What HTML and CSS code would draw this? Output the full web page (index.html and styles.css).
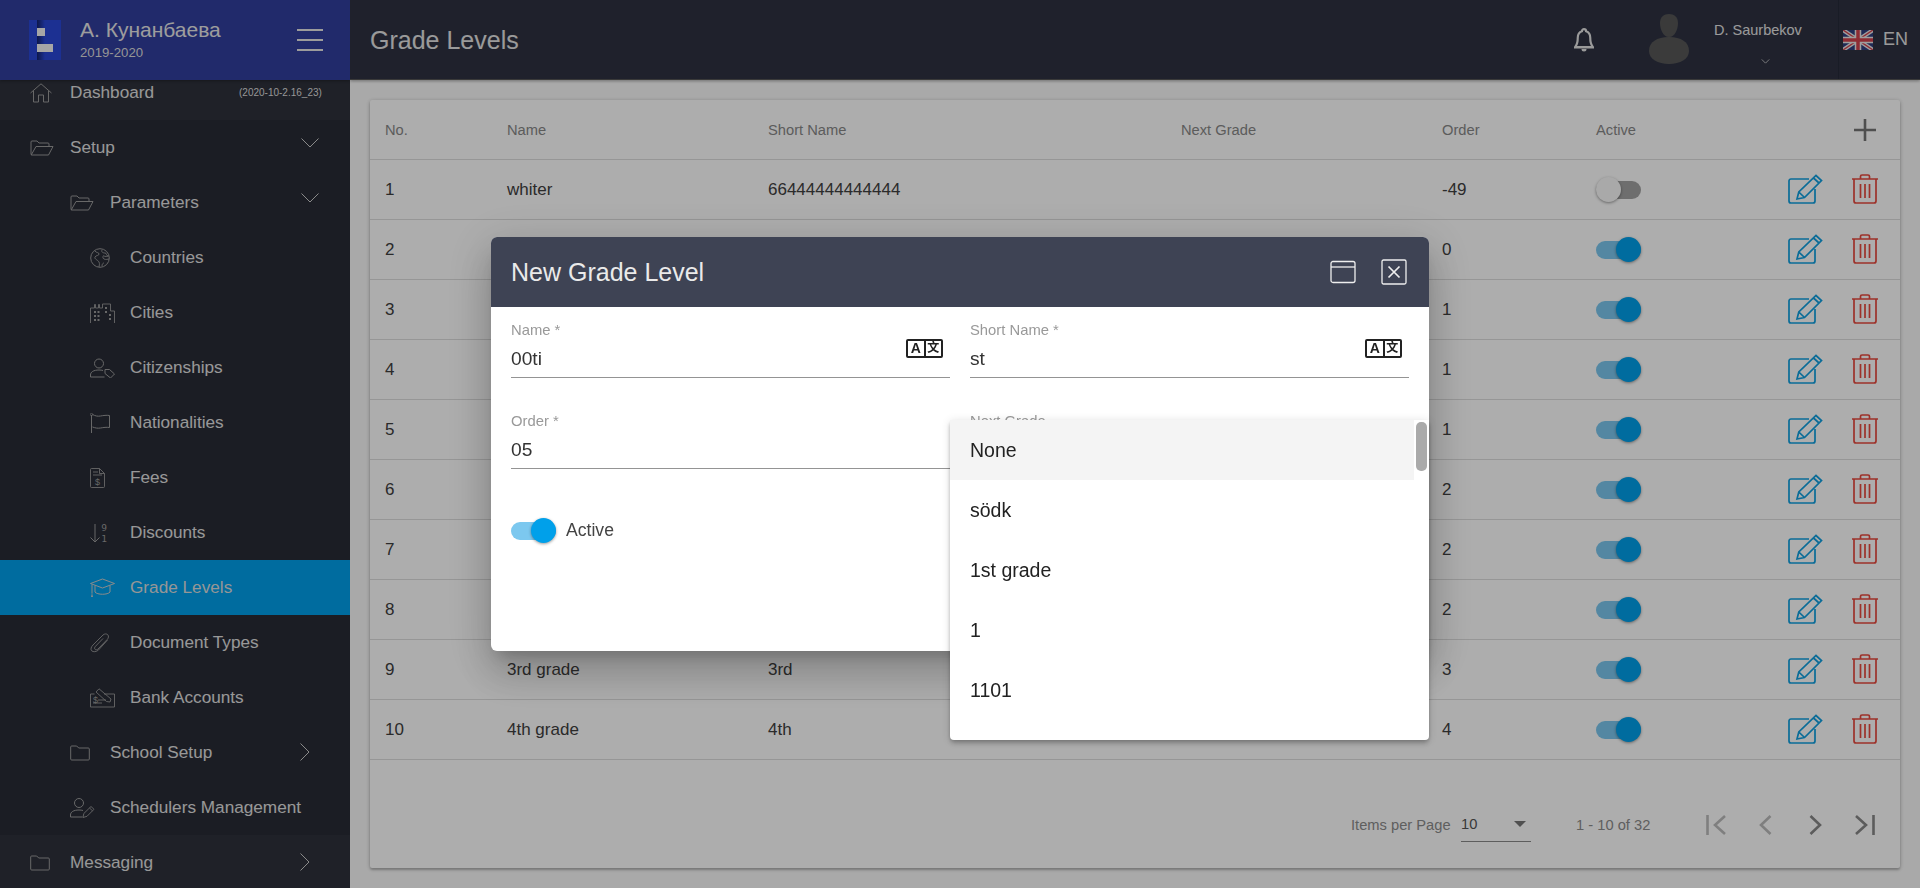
FILE: index.html
```html
<!DOCTYPE html>
<html lang="en">
<head>
<meta charset="utf-8">
<title>Grade Levels</title>
<link rel="stylesheet" href="styles.css">
</head>
<body>
<svg class="defs" width="0" height="0" aria-hidden="true">
  <defs>
    <symbol id="i-folder-open" viewBox="0 0 24 16"><path d="M1 14.500V2a1 1 0 0 1 1-1h5l2 2h9a1 1 0 0 1 1 1v2M1.200 15h17.300l4.500-8.500H6z" fill="none" stroke="currentColor" stroke-width="1"/></symbol>
    <symbol id="i-folder" viewBox="0 0 20 16"><path d="M.7 14V2a1 1 0 0 1 1-1h5l2 2h9.600a1 1 0 0 1 1 1v10a1 1 0 0 1-1 1H1.700a1 1 0 0 1-1-1z" fill="none" stroke="currentColor" stroke-width="1"/></symbol>
    <symbol id="i-down" viewBox="0 0 18 10"><path d="M.5.5 9 9 17.500.5" fill="none" stroke="currentColor" stroke-width="1"/></symbol>
    <symbol id="i-right" viewBox="0 0 10 18"><path d="M.5.500 9 9 .5 17.500" fill="none" stroke="currentColor" stroke-width="1"/></symbol>
    <symbol id="i-edit" viewBox="0 0 35 30"><path d="M21 5H3a2 2 0 0 0-2 2v20a2 2 0 0 0 2 2h22a2 2 0 0 0 2-2V15" fill="none" stroke="currentColor" stroke-width="1.700"/><path d="M9 25l1.800-7L28 1.500l5.500 5L16.500 23.500zM10.800 18l5.700 5.500M25.500 4l5.500 5" fill="none" stroke="currentColor" stroke-width="1.700"/></symbol>
    <symbol id="i-trash" viewBox="0 0 26 30"><path d="M0 5h26M8.500 4.500V2.500a1.500 1.500 0 0 1 1.500-1.500h6a1.500 1.500 0 0 1 1.500 1.500v2M2 5.500V27a2 2 0 0 0 2 2h18a2 2 0 0 0 2-2V5.500M8.500 10v14M13 10v14M17.500 10v14" fill="none" stroke="currentColor" stroke-width="1.700"/></symbol>
  </defs>
</svg>

<div class="app">
  <aside class="sidebar">
    <div class="brand">
      <div class="logo"><span class="logo-a"></span><span class="logo-b"></span></div>
      <div class="brand-text">
        <div class="brand-name">А. Кунанбаева</div>
        <div class="brand-year">2019-2020</div>
      </div>
      <div class="burger"><span></span><span></span><span></span></div>
    </div>
    <nav class="nav">
      <div class="nav-item top lit">
        <svg class="ico w22" viewBox="0 0 22 20"><path d="M.5 10 11 .8 21.500 10M3.500 8v11h5v-7h5v7h5V8" fill="none" stroke="currentColor"/></svg>
        <span class="label">Dashboard</span><span class="version">(2020-10-2.16_23)</span>
      </div>
      <div class="nav-item top">
        <svg class="ico w24"><use href="#i-folder-open"/></svg>
        <span class="label">Setup</span><svg class="chev-down"><use href="#i-down"/></svg>
      </div>
      <div class="nav-item sub">
        <svg class="ico w24"><use href="#i-folder-open"/></svg>
        <span class="label">Parameters</span><svg class="chev-down"><use href="#i-down"/></svg>
      </div>
      <div class="nav-item leaf">
        <svg class="ico w20" viewBox="0 0 20 20"><circle cx="10" cy="10" r="9.300" fill="none" stroke="currentColor"/><path d="M5 3c1 2 4 1 4 3s-3 1-4 3 3 3 4 5 0 4 0 5M12 2c-1 2 1 3 3 3s1 3 3 3-3 1-4 0-2 2 0 3 4 0 5 0M12 18c0-2 1-3 2-3" fill="none" stroke="currentColor" stroke-width=".9"/></svg>
        <span class="label">Countries</span>
      </div>
      <div class="nav-item leaf">
        <svg class="ico w25" viewBox="0 0 25 20"><path d="M.5 20V5h4V1.500h1V5h3V1.500h1V5h3V1h8v7h4v12" fill="none" stroke="currentColor" stroke-width=".9"/><path d="M4 8h2v2H4zM7.500 8h2v2h-2zM4 12h2v2H4zM7.500 12h2v2h-2zM4 16h2v2H4zM7.500 16h2v2h-2zM15 4h2v2h-2zM15 8h2v2h-2zM19 11h2v2h-2zM19 15h2v2h-2z" fill="currentColor"/></svg>
        <span class="label">Cities</span>
      </div>
      <div class="nav-item leaf">
        <svg class="ico w25" viewBox="0 0 25 20"><circle cx="9" cy="5.500" r="4.500" fill="none" stroke="currentColor"/><path d="M.5 19v-2c0-3 3-5 8.500-5 1.500 0 3 .2 4 .500M.5 19h14" fill="none" stroke="currentColor"/><path d="M15 11.500h4.500l5 4.500-4 4-5.500-4.500z" fill="none" stroke="currentColor"/></svg>
        <span class="label">Citizenships</span>
      </div>
      <div class="nav-item leaf">
        <svg class="ico w20" viewBox="0 0 20 20"><path d="M1.500 2v18M2.500 1.500c3 1.500 5 2 8 1.500s6-1 9-.5v12c-3-.5-6 0-9 .5s-5 0-8-1" fill="none" stroke="currentColor"/><circle cx="1.500" cy="1.500" r="1.200" fill="none" stroke="currentColor" stroke-width=".7"/></svg>
        <span class="label">Nationalities</span>
      </div>
      <div class="nav-item leaf">
        <svg class="ico w15" viewBox="0 0 15 20"><path d="M.5 1.500a1 1 0 0 1 1-1h8l5 5v13a1 1 0 0 1-1 1h-12a1 1 0 0 1-1-1zM9.500.5v5h5M3 4h5M3 7h9" fill="none" stroke="currentColor" stroke-width=".9"/><text class="fee-sign" x="7.500" y="16.500" text-anchor="middle">$</text></svg>
        <span class="label">Fees</span>
      </div>
      <div class="nav-item leaf">
        <svg class="ico w18" viewBox="0 0 18 20"><path d="M5 1v18M.5 14.500 5 19l4.500-4.500" fill="none" stroke="currentColor"/><text class="sort-num" x="14" y="8">9</text><text class="sort-num" x="14" y="18.500">1</text></svg>
        <span class="label">Discounts</span>
      </div>
      <div class="nav-item leaf active">
        <svg class="ico w25" viewBox="0 0 25 20"><path d="M12.500 1 24.500 5.500 12.500 10 .5 5.500zM5 7.500V14c2 3 13 3 15 0V7.500M2 6.500v9" fill="none" stroke="currentColor"/><path d="M1 19l1-4 1 4z" fill="currentColor"/></svg>
        <span class="label">Grade Levels</span>
      </div>
      <div class="nav-item leaf">
        <svg class="ico w20" viewBox="0 0 20 20"><path d="M17.500 7 8.500 17c-2 2-5.500 2.200-6.800.8S1 14 3 12L13 2c1.500-1.400 3.700-1.400 4.800-.2s.8 3.200-.6 4.700L8 16c-1 1-2.300 1-3 .3s-.5-2 .5-3L13 5.500" fill="none" stroke="currentColor" stroke-width=".9"/></svg>
        <span class="label">Document Types</span>
      </div>
      <div class="nav-item leaf">
        <svg class="ico w25" viewBox="0 0 25 20"><path d="M.5 6h4M14 6h10.500v13H.5V6M3 15h9M8 12h8" fill="none" stroke="currentColor" stroke-width=".9"/><path d="M6 4 9 .8 21 11l-1 3-3.500-.5z" fill="none" stroke="currentColor" stroke-width=".9"/><text class="fee-sign" x="3" y="15">$</text></svg>
        <span class="label">Bank Accounts</span>
      </div>
      <div class="nav-item sub">
        <svg class="ico w20h"><use href="#i-folder"/></svg>
        <span class="label">School Setup</span><svg class="chev-right"><use href="#i-right"/></svg>
      </div>
      <div class="nav-item sub">
        <svg class="ico w25" viewBox="0 0 25 20"><circle cx="9" cy="5" r="4.500" fill="none" stroke="currentColor"/><path d="M.5 19v-2c0-3 3-5 8.500-5 1.500 0 3 .2 4 .500M.5 19h12" fill="none" stroke="currentColor"/><path d="M13 19.500l.8-4L21 8.500l3 2.800-7 7zM19.500 10l3 2.800" fill="none" stroke="currentColor" stroke-width=".9"/></svg>
        <span class="label">Schedulers Management</span>
      </div>
      <div class="nav-item top lit">
        <svg class="ico w20h"><use href="#i-folder"/></svg>
        <span class="label">Messaging</span><svg class="chev-right"><use href="#i-right"/></svg>
      </div>
    </nav>
  </aside>

  <div class="main">
    <header class="topbar">
      <h1 class="page-title">Grade Levels</h1>
      <svg class="bell" viewBox="0 0 24 30"><path d="M9.500 5a2.500 2.500 0 1 1 5 0C18 6 19.500 9 19.500 13c0 5 .8 8 2.500 10v1H2v-1C3.700 21 4.500 18 4.500 13c0-4 1.500-7 5-8z" fill="none" stroke="currentColor" stroke-width="2.600"/><path d="M0 24.500h24" stroke="currentColor" stroke-width="2.600"/><path d="M9 26.500h6a3 3 0 0 1-6 0z" fill="currentColor"/></svg>
      <svg class="avatar" viewBox="0 0 40 50"><path d="M11 9C11 3 15 0 20 0s9 3 9 9-3 14-9 14-9-8-9-14z" fill="#565656"/><path d="M0 37c0-9 8-14 20-14s20 5 20 14c0 8-9 13-20 13S0 45 0 37z" fill="#585858"/></svg>
      <div class="user">
        <div class="user-name">D. Saurbekov</div>
        <svg class="user-chev" viewBox="0 0 10 6"><path d="M.5.5 5 5 9.500.5" fill="none" stroke="currentColor"/></svg>
      </div>
      <div class="lang">
        <svg class="flag" viewBox="0 0 30 20"><rect width="30" height="20" fill="#2f3f7f"/><path d="M0 0 30 20M30 0 0 20" stroke="#e9e9e9" stroke-width="4"/><path d="M0 0 30 20M30 0 0 20" stroke="#d2404c" stroke-width="1.400"/><path d="M15 0v20M0 10h30" stroke="#e9e9e9" stroke-width="6.500"/><path d="M15 0v20M0 10h30" stroke="#d2404c" stroke-width="3.500"/></svg>
        <span class="lang-code">EN</span>
      </div>
    </header>

    <section class="card">
      <table class="grid">
        <colgroup><col class="c-no"><col class="c-name"><col class="c-short"><col class="c-next"><col class="c-order"><col class="c-active"><col class="c-actions"></colgroup>
        <thead>
          <tr><th>No.</th><th>Name</th><th>Short Name</th><th>Next Grade</th><th>Order</th><th>Active</th>
            <th class="plus-cell"><svg class="plus" viewBox="0 0 24 24"><path d="M12 1v22M1 12h22" stroke="currentColor" stroke-width="2.600"/></svg></th></tr>
        </thead>
        <tbody id="rows"></tbody>
      </table>
      <div class="pager">
        <span class="pager-label">Items per Page</span>
        <div class="pager-select"><span>10</span><i class="tri"></i></div>
        <span class="pager-range">1 - 10 of 32</span>
        <div class="pager-btns">
          <svg class="pg dim" viewBox="0 0 20 22"><path d="M1.500 1v20" stroke="currentColor" stroke-width="2.600"/><path d="M19 2 9 11l10 9" fill="none" stroke="currentColor" stroke-width="2.600"/></svg>
          <svg class="pg dim narrow" viewBox="0 0 14 22"><path d="M12.500 2 3 11l9.500 9" fill="none" stroke="currentColor" stroke-width="2.600"/></svg>
          <svg class="pg narrow" viewBox="0 0 14 22"><path d="M1.500 2 11 11l-9.500 9" fill="none" stroke="currentColor" stroke-width="2.600"/></svg>
          <svg class="pg" viewBox="0 0 20 22"><path d="M18.500 1v20" stroke="currentColor" stroke-width="2.600"/><path d="M1 2l10 9-10 9" fill="none" stroke="currentColor" stroke-width="2.600"/></svg>
        </div>
      </div>
    </section>
  </div>
</div>

<div class="backdrop"></div>

<div class="dialog">
  <div class="dialog-head">
    <h2 class="dialog-title">New Grade Level</h2>
    <svg class="maxi" viewBox="0 0 26 24"><rect x="1" y="1.500" width="24" height="21" rx="2" fill="none" stroke="currentColor" stroke-width="1.300"/><path d="M1 7h24" stroke="currentColor" stroke-width="1.300"/></svg>
    <svg class="close" viewBox="0 0 26 26"><rect x="1" y="1" width="24" height="24" rx="1.500" fill="none" stroke="currentColor" stroke-width="1.300"/><path d="M7.500 7.500l11 11M18.500 7.500l-11 11" stroke="currentColor" stroke-width="1.700"/></svg>
  </div>
  <div class="dialog-body">
    <div class="fields">
      <div class="field"><label>Name *</label><div class="value">00ti</div>
        <div class="tr-ico"><b>A</b><b>文</b></div></div>
      <div class="field"><label>Short Name *</label><div class="value">st</div>
        <div class="tr-ico"><b>A</b><b>文</b></div></div>
      <div class="field"><label>Order *</label><div class="value">05</div></div>
      <div class="field"><label>Next Grade</label><div class="value"></div></div>
    </div>
    <div class="active-row">
      <span class="toggle bright on"><i></i></span><span>Active</span>
    </div>
  </div>
</div>

<div class="dropdown">
  <div class="opt sel">None</div>
  <div class="opt">södk</div>
  <div class="opt">1st grade</div>
  <div class="opt">1</div>
  <div class="opt">1101</div>
  <span class="scroll-thumb"></span>
</div>

<script src="app.js"></script>
</body>
</html>
```

FILE: app.js
```js
var data = [
  ["1", "whiter", "66444444444444", "", "-49", false],
  ["2", "00", "00", "", "0", true],
  ["3", "1st grade", "1st", "", "1", true],
  ["4", "1", "1", "", "1", true],
  ["5", "1101", "11", "", "1", true],
  ["6", "2nd grade", "2nd", "", "2", true],
  ["7", "2", "2", "", "2", true],
  ["8", "22", "22", "", "2", true],
  ["9", "3rd grade", "3rd", "", "3", true],
  ["10", "4th grade", "4th", "", "4", true]
];
var html = "";
data.forEach(function (r) {
  html += '<tr><td class="txt">' + r[0] + '</td><td class="txt">' + r[1] + '</td><td class="txt">' + r[2] + '</td><td class="txt">' + r[3] + '</td><td class="txt">' + r[4] + "</td>" +
    '<td><span class="toggle' + (r[5] ? " on" : "") + '"><i></i></span></td>' +
    '<td class="acts"><svg class="edit"><use href="#i-edit"/></svg><svg class="trash"><use href="#i-trash"/></svg></td></tr>';
});
document.getElementById("rows").innerHTML = html;
```

FILE: styles.css
```css
* { box-sizing: border-box; }
html, body { margin: 0; height: 100%; overflow: hidden; }
body { font-family: "Liberation Sans", Arial, sans-serif; background: #fafafa; color: #333; }
.defs { position: absolute; }
.app { display: flex; height: 888px; }

/* sidebar */
.sidebar { width: 350px; flex: none; background: #282b36; height: 888px; overflow: hidden; position: relative; z-index: 0; color: #e2e2e2; }
.brand { position: relative; z-index: 2; height: 80px; background: #313e9e; display: flex; align-items: center; padding: 0 27px 0 29px; box-shadow: 0 1px 3px rgba(0,0,0,.3); }
.logo { width: 32px; height: 40px; flex: none; position: relative; background: linear-gradient(90deg, #2a48d8 0 8px, #14236e 8px, #2a48d8 16px); }
.logo-a { position: absolute; left: 8px; top: 8px; width: 8px; height: 8px; background: #f5f5f5; }
.logo-b { position: absolute; left: 8px; top: 24px; width: 16px; height: 8px; background: #f5f5f5; }
.brand-text { margin-left: 19px; flex: 1; }
.brand-name { font-size: 21px; line-height: 24px; margin-top: -1px; color: #e8e8e8; }
.brand-year { font-size: 13.200px; line-height: 16px; margin-top: 3px; color: #dcdcdc; }
.burger { width: 26px; display: flex; flex-direction: column; gap: 8px; }
.burger span { height: 2px; background: #e6e6e6; }
.nav { margin-top: -15px; }
.nav-item { height: 55px; display: flex; align-items: center; position: relative; font-size: 17.200px; color: #e0e0e0; }
.nav-item.lit { background: #2e313b; }
.nav-item.top { padding-left: 30px; }
.nav-item.sub { padding-left: 70px; }
.nav-item.leaf { padding-left: 90px; }
.nav-item.active { background: #00a0ea; color: #ddd; }
.ico { width: 20px; height: 20px; flex: none; position: absolute; color: #9a9a9a; }
.top .ico { left: 30px; }
.sub .ico { left: 70px; }
.leaf .ico { left: 90px; }
.active .ico { color: #ccc; }
.top .label, .sub .label, .leaf .label { margin-left: 40px; }
.w22 { width: 22px; }
.w24 { width: 24px; height: 16px; }
.w25 { width: 25px; }
.w15 { width: 15px; }
.w18 { width: 18px; }
.w20h { width: 20px; height: 16px; }
.fee-sign { font: 9px "Liberation Sans", sans-serif; fill: currentColor; }
.sort-num { font: 9.500px "DejaVu Sans Mono", monospace; fill: currentColor; text-anchor: middle; }
.version { position: absolute; left: 239px; font-size: 10px; color: #ddd; }
.chev-down { position: absolute; left: 301px; top: 18px; width: 18px; height: 10px; color: #ccc; }
.chev-right { position: absolute; left: 300px; top: 18px; width: 10px; height: 18px; color: #ccc; }

/* main */
.main { flex: 1; min-width: 0; display: flex; flex-direction: column; }
.topbar { height: 80px; flex: none; background: #2e3242; display: flex; align-items: center; padding-left: 20px; color: #e4e4e4; box-shadow: 0 1px 3px rgba(0,0,0,.35); border-bottom: 1px solid #555; }
.page-title { font-size: 25px; font-weight: 400; margin: 1px 0 0; flex: 1; color: #e4e4e4; }
.bell { width: 20px; height: 25px; margin-right: 55px; }
.avatar { width: 40px; height: 50px; margin-right: 26px; margin-top: -1px; }
.user { width: 123px; height: 80px; display: flex; flex-direction: column; font-size: 14.500px; }
.user-name { margin-top: 21px; line-height: 18px; margin-left: -1px; }
.user-chev { width: 9px; height: 5px; margin: 20px 0 0 46px; color: #ccc; }
.lang { width: 82px; height: 79px; display: flex; align-items: center; border-left: 1px solid #262a38; padding-left: 4px; }
.flag { width: 30px; height: 20px; }
.lang-code { font-size: 18px; margin-left: 10px; }

/* card + table */
.card { margin: 20px 20px 0 20px; height: 768px; background: #fff; box-shadow: 0 1px 4px rgba(0,0,0,.28), 0 2px 2px rgba(0,0,0,.14); border-radius: 2px; }
.grid { width: 100%; border-collapse: collapse; table-layout: fixed; }
.c-no { width: 122px; }
.c-name { width: 261px; }
.c-short { width: 413px; }
.c-next { width: 261px; }
.c-order { width: 154px; }
.c-active { width: 156px; }
.grid th { height: 59px; font-weight: 400; font-size: 14.700px; color: #888; text-align: left; padding: 1px 0 0 15px; border-bottom: 1px solid #ddd; }
.grid td { height: 60px; font-size: 17px; color: #404040; padding: 0 0 0 15px; border-bottom: 1px solid #ddd; }
.grid td.txt { padding-top: 2px; }
.grid th.plus-cell { text-align: right; padding-right: 23px; }
.plus { width: 24px; height: 24px; color: #757575; display: inline-block; vertical-align: middle; }
.acts { white-space: nowrap; }
.edit { width: 35px; height: 30px; color: #0fa0e0; vertical-align: middle; margin-left: 36px; }
.trash { width: 26px; height: 30px; color: #e8493f; vertical-align: middle; margin-left: 29px; }

.toggle { display: inline-block; width: 45px; height: 18px; border-radius: 9px; background: #a3a3a3; position: relative; vertical-align: middle; }
.toggle i { position: absolute; left: 0; top: -3.500px; width: 25px; height: 25px; border-radius: 50%; background: #fafafa; box-shadow: 0 1px 3px rgba(0,0,0,.4); }
.toggle.on { background: #7cc8ef; }
.toggle.on i { left: 20px; background: #00a0ea; }

.pager { height: 108px; display: flex; align-items: center; padding: 22px 0 0 981px; font-size: 14.700px; color: #8c8c8c; }
.pager-label { width: 110px; }
.pager-select { width: 70px; height: 34px; border-bottom: 1px solid #8a8a8a; display: flex; align-items: center; justify-content: space-between; padding: 0 5px 0 0; color: #555; }
.tri { width: 0; height: 0; border-left: 6.500px solid transparent; border-right: 6.500px solid transparent; border-top: 6.500px solid #767676; }
.pager-range { margin-left: 45px; width: 130px; }
.pager-btns { display: flex; align-items: center; color: #888; }
.pg { width: 20px; height: 22px; color: #888; }
.pg.narrow { width: 14px; }
.pg.dim { color: #bcbcbc; }
.pg:nth-child(2) { margin-left: 32px; }
.pg:nth-child(3) { margin-left: 37px; }
.pg:nth-child(4) { margin-left: 32px; }

/* overlay */
.backdrop { position: fixed; inset: 0; background: rgba(0,0,0,.32); z-index: 1; }
.dialog { position: fixed; z-index: 2; left: 491px; top: 237px; width: 938px; height: 414px; background: #fff; border-radius: 6px; overflow: hidden; box-shadow: 0 11px 15px -7px rgba(0,0,0,.2), 0 24px 38px 3px rgba(0,0,0,.14), 0 9px 46px 8px rgba(0,0,0,.12); }
.dialog-head { height: 70px; background: #3e4354; display: flex; align-items: center; padding: 0 22px 0 20px; color: #eee; }
.dialog-title { font-size: 25px; font-weight: 400; margin: 0; flex: 1; color: #eaeaea; }
.maxi { width: 26px; height: 24px; margin-right: 25px; }
.close { width: 26px; height: 26px; }
.dialog-body { padding: 15px 20px 0; }
.fields { display: grid; grid-template-columns: 439px 439px; column-gap: 20px; row-gap: 35px; }
.field { height: 56px; position: relative; border-bottom: 1px solid #949494; }
.field label { display: block; font-size: 14.800px; line-height: 17px; color: #999; }
.value { font-size: 19.200px; line-height: 24px; margin-top: 8px; color: #333; }
.tr-ico { position: absolute; right: 7px; top: 17px; width: 37px; height: 19px; border: 2px solid #222; border-radius: 2px; display: flex; color: #222; }
.tr-ico b { flex: 1; text-align: center; font: 700 14px/15px "Liberation Sans", "Noto Sans CJK SC", sans-serif; }
.tr-ico b + b { border-left: 2px solid #222; font-size: 12px; }
.active-row { display: flex; align-items: center; gap: 10px; margin-top: 51px; font-size: 17.600px; color: #444; }
.toggle.bright { margin: 0; flex: none; }

.dropdown { position: fixed; z-index: 3; left: 950px; top: 420px; width: 479px; height: 320px; background: #fff; border-radius: 0 0 4px 4px; overflow: hidden; box-shadow: 0 2px 4px -1px rgba(0,0,0,.2), 0 4px 5px rgba(0,0,0,.14), 0 1px 10px rgba(0,0,0,.12); }
.opt { height: 60px; width: 464px; padding-left: 20px; display: flex; align-items: center; font-size: 19.500px; color: #222; }
.opt.sel { background: #f4f4f4; }
.scroll-thumb { position: absolute; right: 2px; top: 2px; width: 11px; height: 49px; border-radius: 5px; background: #aaa; }
```
